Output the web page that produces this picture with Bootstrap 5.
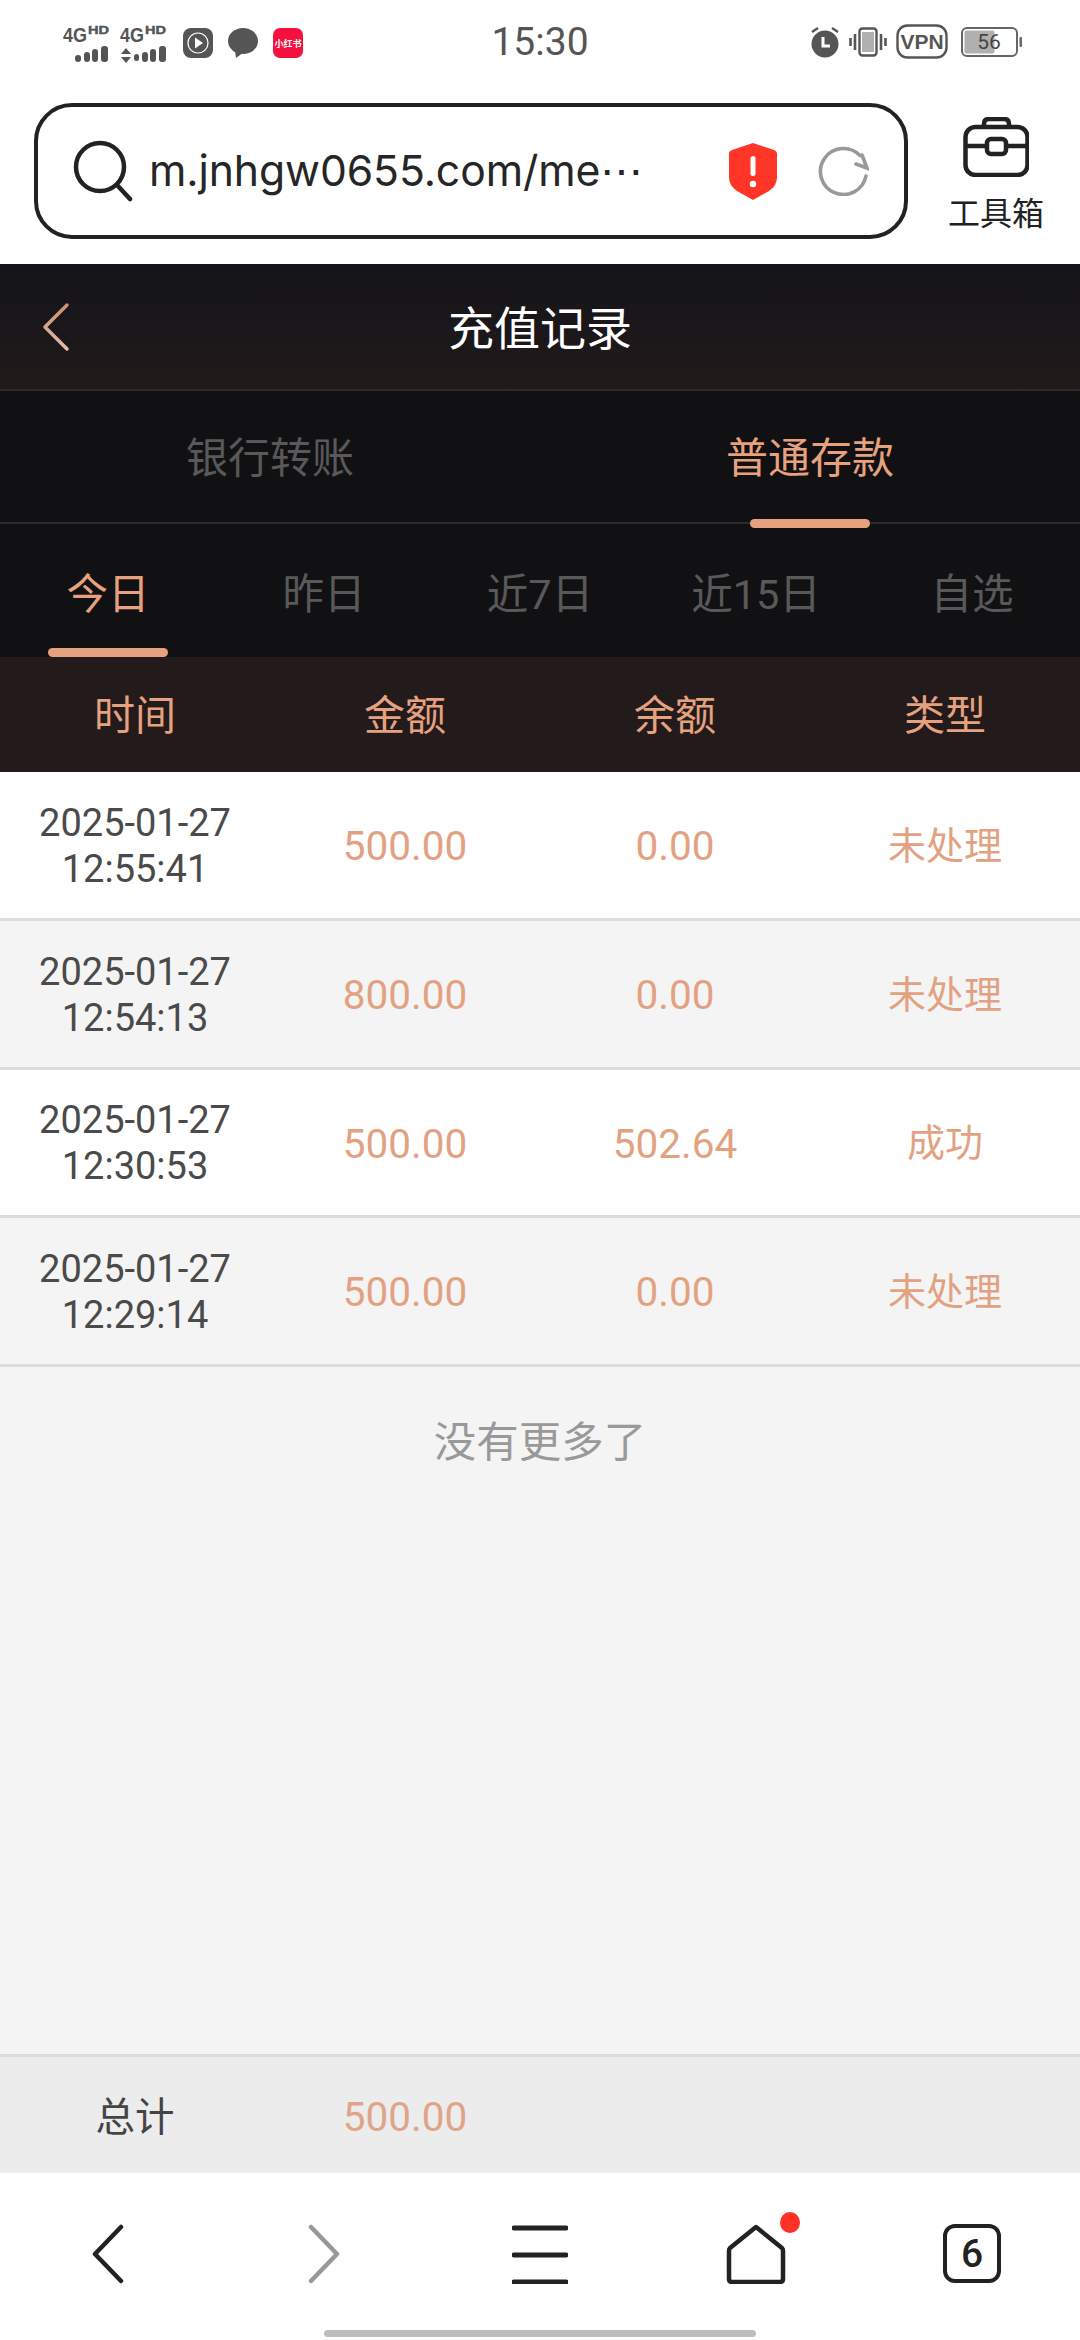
<!doctype html>
<html lang="zh"><head><meta charset="utf-8"><title>充值记录</title>
<link href="https://cdn.jsdelivr.net/npm/bootstrap@5.3.0/dist/css/bootstrap.min.css" rel="stylesheet">
<style>
html,body{margin:0;height:2340px;overflow:hidden;}
body{width:1080px;background:#fff;font-family:Roboto,"Noto Sans CJK SC",sans-serif;color:#444;}
svg{display:block;flex:none;}
.shell{height:2340px;}
.statusbar{height:103px;padding:24px 58px 0 63px;}
.st-time{position:absolute;left:0;right:0;top:19px;text-align:center;font-size:39px;line-height:46px;color:#555;}
.st-wrap{position:relative;}
.st-left{gap:9px;}
.st-gap{margin-left:6px;margin-top:4px;}
.st-right{gap:9px;}
.addr-row{height:161px;padding:0 0 25px 34px;}
.addr{width:874px;height:136px;border:4.5px solid #222;border-radius:38px;padding:0 0 0 35px;background:#fff;}
.addr-url{margin-left:16px;font-family:Inter,Roboto,sans-serif;font-size:42.7px;color:#262626;width:486px;white-space:nowrap;letter-spacing:-.1px;}
.tool{width:172px;padding-left:4px;color:#222;font-size:32px;line-height:38px;}
.tool span{margin-top:18px;}
.tool svg{margin-top:14px;}
.shield-x{margin-left:auto;margin-right:40px;}
.reload-x{margin-right:35px;}
.page-head{height:127px;background:linear-gradient(#14141a,#211a1a);border-bottom:2px solid #2e2c2c;padding-left:42px;position:relative;}
.page-title{position:absolute;left:0;right:0;top:0;bottom:0;line-height:131px;text-align:center;font-size:46px;color:#fff;}
.tabs-a{height:133px;background:#111113;border-bottom:2px solid #2c2c2c;}
.tabs-b{height:133px;background:#111113;}
.tab-x{position:relative;text-align:center;color:#595959;}
.tabs-a .tab-x{font-size:42px;line-height:136px;}
.tabs-b .tab-x{font-size:41.5px;line-height:141px;}
.tab-on{color:#e6a17e;}
.tab-on::after{content:"";position:absolute;left:50%;bottom:0;width:120px;height:9px;margin-left:-60px;background:#e6a17e;border-radius:5px;}
.tabs-a .tab-on::after{bottom:-1px;}
.thead-x{height:115px;background:#231b1b;color:#e6a17e;font-size:41px;line-height:118px;}
.cell{text-align:center;}
.trow{height:148.75px;background:#fff;border-bottom:3px solid #dcdcdc;}
.trow-alt{background:#f4f4f4;}
.date{font-size:38px;line-height:46px;color:#4a4a4a;padding-top:2px;}
.amt{font-size:40.5px;color:#e2a282;padding-top:3px;}
.kind{font-size:38px;color:#e2a282;padding-top:3px;}
.content{background:#f4f4f5;}
.nomore{font-size:42.5px;line-height:50px;padding-top:51px;text-align:center;color:#999;}
.total{height:119px;background:#ececec;border-top:3px solid #dcdcdc;font-size:39.5px;}
.total .cell{padding-top:5px;}
.total .amt{color:#e0a488;}
.bottombar{height:167px;position:relative;padding-top:51px;}
.nav-slot{width:216px;}
.dot-x{position:absolute;left:780px;top:39px;width:20px;height:21px;border-radius:50%;background:#ff3126;}
.tabnum{width:58px;height:59px;border:4.5px solid #222;border-radius:12px;font-size:39px;line-height:52px;text-align:center;color:#222;font-family:Roboto,sans-serif;font-weight:500;}
.grabber{position:absolute;left:324px;top:157px;width:432px;height:7px;border-radius:4px;background:#bdbdbd;}
</style></head><body>
<div class="shell d-flex flex-column">
 <div class="statusbar st-wrap d-flex justify-content-between align-items-start">
  <div class="d-flex st-left align-items-start">
   <svg width="48" height="42" viewBox="0 0 48 42" fill="#555"><text x="0" y="18" font-family="Liberation Sans" font-weight="700" font-size="21" textLength="24" lengthAdjust="spacingAndGlyphs">4G</text><text x="25" y="10" font-family="Liberation Sans" font-weight="700" font-size="11" textLength="21" lengthAdjust="spacingAndGlyphs" stroke="#555" stroke-width=".4">HD</text><rect x="12" y="31" width="6" height="7" rx="3"/><rect x="21" y="28" width="6" height="10" rx="3"/><rect x="29" y="25" width="6" height="13" rx="3"/><rect x="38" y="22" width="7" height="16" rx="3"/></svg>
   <svg width="48" height="42" viewBox="0 0 48 42" fill="#555"><text x="0" y="18" font-family="Liberation Sans" font-weight="700" font-size="21" textLength="24" lengthAdjust="spacingAndGlyphs">4G</text><text x="25" y="10" font-family="Liberation Sans" font-weight="700" font-size="11" textLength="21" lengthAdjust="spacingAndGlyphs" stroke="#555" stroke-width=".4">HD</text><path d="M1 30l5-6 5 6zM1 33l5 6 5-6z"/><rect x="14" y="30" width="5" height="7" rx="2.5"/><rect x="22" y="28" width="6" height="10" rx="3"/><rect x="30" y="25" width="6" height="13" rx="3"/><rect x="39" y="22" width="7" height="16" rx="3"/></svg>
   <svg class="st-gap" width="30" height="30" viewBox="0 0 30 30"><rect width="30" height="30" rx="8" fill="#555"/><circle cx="15" cy="15" r="10" fill="none" stroke="#fff" stroke-width="1.2"/><path d="M12 9.5l8 5.5-8 5.500z" fill="#fff"/></svg>
   <svg class="st-gap" width="30" height="30" viewBox="0 0 30 30"><ellipse cx="15" cy="13" rx="15" ry="13" fill="#555"/><path d="M7 22l1 8 8-6z" fill="#555"/></svg>
   <svg class="st-gap" width="30" height="30" viewBox="0 0 30 30"><rect width="30" height="30" rx="7" fill="#f5103d"/><text x="15" y="19" text-anchor="middle" fill="#fff" font-family="Noto Sans CJK SC" font-weight="700" font-size="9">小红书</text></svg>
  </div>
  <div class="st-time">15:30</div>
  <div class="d-flex st-right align-items-center">
   <svg width="30" height="32" viewBox="0 0 30 32" fill="#555"><circle cx="15" cy="18" r="13.5"/><path d="M13 11v9h7" stroke="#fff" stroke-width="3" fill="none"/><path d="M2 6l6-4M28 6l-6-4" stroke="#555" stroke-width="2.4"/></svg>
   <svg width="38" height="30" viewBox="0 0 38 30"><rect x="10.5" y="1.5" width="17" height="27" rx="3" fill="#fff" stroke="#555" stroke-width="2.4"/><rect x="13" y="5" width="12" height="20" fill="#b0b0b0"/><path d="M1.5 11v8M6 7v16M32 7v16M36.5 11v8" stroke="#555" stroke-width="2.6"/></svg>
   <svg width="52" height="35" viewBox="0 0 52 35"><rect x="1.5" y="1.5" width="49" height="32" rx="10" fill="#fff" stroke="#555" stroke-width="2.4"/><text x="26" y="25" text-anchor="middle" fill="#555" font-family="Liberation Sans" font-weight="700" font-size="21">VPN</text></svg>
   <svg class="ms-1" width="61" height="30" viewBox="0 0 61 30"><rect x="1" y="1" width="55" height="28" rx="5" fill="#fff" stroke="#666" stroke-width="2"/><rect x="3.5" y="3.5" width="30" height="23" rx="2" fill="#b0b0b0"/><text x="28" y="22" text-anchor="middle" fill="#444" font-family="Roboto" font-size="21">56</text><rect x="58.500" y="10" width="2.500" height="10" rx="1" fill="#666"/></svg>
  </div>
 </div>

 <div class="addr-row d-flex align-items-start">
  <div class="addr d-flex align-items-center">
   <svg width="60" height="62" viewBox="0 0 60 62" fill="none" stroke="#222" stroke-width="4.500" stroke-linecap="round"><circle cx="27" cy="27" r="24"/><path d="M44 45l13 14"/></svg>
   <div class="addr-url">m.jnhgw0655.com/me⋯</div>
   <svg class="shield-x" width="48" height="57" viewBox="0 0 48 57"><path d="M24 0l21 7q3 1 3 4v23q0 9-8 14l-16 9-16-9q-8-5-8-14V11q0-3 3-4z" fill="#ff3527"/><rect x="21.500" y="13" width="5" height="20" rx="2.500" fill="#fff"/><circle cx="24" cy="41" r="3.200" fill="#fff"/></svg>
   <svg class="reload-x" width="52" height="50" viewBox="0 0 52 50" fill="none" stroke="#999" stroke-width="3.600" stroke-linecap="round"><path d="M43 9.500A23 23 0 1 0 49 30"/><path d="M45 9l5 13-11-4"/></svg>
  </div>
  <div class="tool d-flex flex-column align-items-center">
   <svg width="66" height="60" viewBox="0 0 66 60" fill="none" stroke="#222" stroke-width="4.500" stroke-linejoin="round"><rect x="2.500" y="10" width="62" height="48" rx="10"/><path d="M21 10V7q0-5 5-5h15q5 0 5 5v3M2.500 29h21M43.500 29h21"/><rect x="24" y="22" width="19" height="15" rx="4"/></svg>
   <span>工具箱</span>
  </div>
 </div>

 <div class="page-head d-flex align-items-center">
  <svg width="28" height="50" viewBox="0 0 28 50" fill="none"><defs><linearGradient id="bk" x1="0" y1="0" x2="0" y2="1"><stop offset="0" stop-color="#c98f70"/><stop offset="1" stop-color="#e8bca6"/></linearGradient></defs><path d="M25 3L3 25l22 22" stroke="url(#bk)" stroke-width="3.500" stroke-linecap="round" stroke-linejoin="round"/></svg>
  <div class="page-title">充值记录</div>
 </div>

 <div class="tabs-a row g-0">
  <div class="col-6 tab-x">银行转账</div>
  <div class="col-6 tab-x tab-on">普通存款</div>
 </div>
 <div class="tabs-b d-flex">
  <div class="flex-fill w-100 tab-x tab-on">今日</div>
  <div class="flex-fill w-100 tab-x">昨日</div>
  <div class="flex-fill w-100 tab-x">近7日</div>
  <div class="flex-fill w-100 tab-x">近15日</div>
  <div class="flex-fill w-100 tab-x">自选</div>
 </div>
 <div class="thead-x row g-0">
  <div class="col-3 cell">时间</div><div class="col-3 cell">金额</div><div class="col-3 cell">余额</div><div class="col-3 cell">类型</div>
 </div>

 <div class="content flex-grow-1">
  <div class="trow row g-0 align-items-center">
   <div class="col-3 cell date">2025-01-27<br>12:55:41</div><div class="col-3 cell amt">500.00</div><div class="col-3 cell amt">0.00</div><div class="col-3 cell kind">未处理</div>
  </div>
  <div class="trow trow-alt row g-0 align-items-center">
   <div class="col-3 cell date">2025-01-27<br>12:54:13</div><div class="col-3 cell amt">800.00</div><div class="col-3 cell amt">0.00</div><div class="col-3 cell kind">未处理</div>
  </div>
  <div class="trow row g-0 align-items-center">
   <div class="col-3 cell date">2025-01-27<br>12:30:53</div><div class="col-3 cell amt">500.00</div><div class="col-3 cell amt">502.64</div><div class="col-3 cell kind">成功</div>
  </div>
  <div class="trow trow-alt row g-0 align-items-center">
   <div class="col-3 cell date">2025-01-27<br>12:29:14</div><div class="col-3 cell amt">500.00</div><div class="col-3 cell amt">0.00</div><div class="col-3 cell kind">未处理</div>
  </div>
  <div class="nomore">没有更多了</div>
 </div>

 <div class="total row g-0 align-items-center">
  <div class="col-3 cell">总计</div><div class="col-3 cell amt">500.00</div>
 </div>

 <div class="bottombar d-flex justify-content-between">
  <div class="nav-slot d-flex justify-content-center"><svg width="34" height="60" viewBox="0 0 34 60" fill="none" stroke="#222" stroke-width="4.500" stroke-linecap="round" stroke-linejoin="round"><path d="M30 3L4 30l26 27"/></svg></div>
  <div class="nav-slot d-flex justify-content-center"><svg width="34" height="60" viewBox="0 0 34 60" fill="none" stroke="#999" stroke-width="4.500" stroke-linecap="round" stroke-linejoin="round"><path d="M4 3l26 27L4 57"/></svg></div>
  <div class="nav-slot d-flex justify-content-center"><svg width="56" height="60" viewBox="0 0 56 60" stroke="#222" stroke-width="5" stroke-linecap="round"><path d="M2 4h52M2 31h52M2 58h52"/></svg></div>
  <div class="nav-slot d-flex justify-content-center"><svg width="60" height="60" viewBox="0 0 60 60" fill="none" stroke="#222" stroke-width="4.500" stroke-linejoin="round"><path d="M30 3L56 24q1 1 1 3v28q0 3-3 3H6q-3 0-3-3V27q0-2 1-3z"/></svg></div>
  <div class="nav-slot d-flex justify-content-center"><div class="tabnum">6</div></div>
  <div class="dot-x"></div>
  <div class="grabber"></div>
 </div>
</div>
</body></html>
